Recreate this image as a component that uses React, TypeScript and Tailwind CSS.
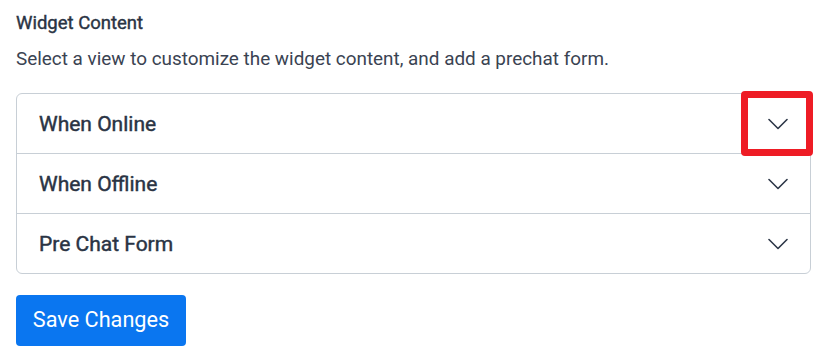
import React from "react";

const Chevron = () => (
  <svg width="20" height="12" viewBox="0 0 20 12" fill="none" className="block">
    <path d="M1 1.5 L10 10.5 L19 1.5" stroke="#2d3748" strokeWidth="1.6" strokeLinecap="round" strokeLinejoin="round" />
  </svg>
);

const Row = ({ label, last, highlight }: { label: string; last?: boolean; highlight?: boolean }) => (
  <div className={`relative flex items-center justify-between pl-[22px] pr-[22px] ${last ? "h-[59px]" : "h-[60px] border-b border-[#c8cfd6]"}`}>
    <span className="text-[21px] font-normal leading-[26px] text-[#2a3444] [-webkit-text-stroke:0.45px_#2a3444]">{label}</span>
    <Chevron />
    {highlight && (
      <div className="absolute right-[-3px] top-[-3px] h-[65px] w-[72px] rounded-[4px] border-[7.5px] border-[#ee1c25]" />
    )}
  </div>
);

export default function App() {
  return (
    <div className="min-h-[361px] bg-white px-4 pt-[11px]" style={{ fontFamily: "Roboto, 'Liberation Sans', sans-serif" }}>
      <h2 className="text-[18.5px] font-normal leading-[24px] text-[#2a3444] [-webkit-text-stroke:0.4px_#2a3444]">Widget Content</h2>
      <p className="mt-[11px] text-[18.9px] leading-[26px] text-[#3a4352]">
        Select a view to customize the widget content, and add a prechat form.
      </p>
      <div className="mt-[21px] w-[795px] rounded-[6px] border border-[#c8cfd6]">
        <Row label="When Online" highlight />
        <Row label="When Offline" />
        <Row label="Pre Chat Form" last />
      </div>
      <button className="mt-[21px] flex h-[51px] w-[170px] items-center justify-center rounded-[4px] bg-[#0a76f0] text-[21.7px] text-white">
        Save Changes
      </button>
    </div>
  );
}
